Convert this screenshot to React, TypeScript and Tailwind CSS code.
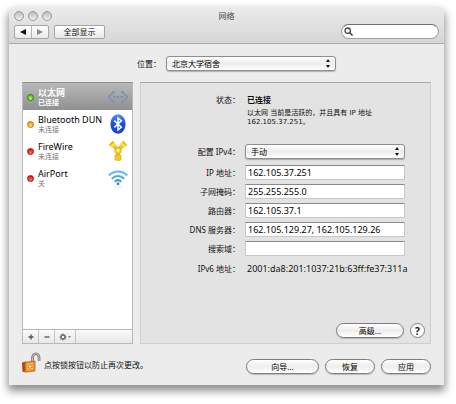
import React, { useState } from "react";

type Status = "green" | "amber" | "red";

interface Service {
    id: string;
    name: string;
    state: string;
    status: Status;
    icon: React.ReactNode;
}

const lampColors: Record<Status, string> = {
    green: "border-[#3c7a10] bg-[radial-gradient(circle_at_50%_75%,#b6ff5a,#4fc400_80%)]",
    amber: "border-[#b5751a] bg-[radial-gradient(circle_at_50%_75%,#ffe36a,#f59a00_80%)]",
    red: "border-[#a01515] bg-[radial-gradient(circle_at_50%_75%,#ff7a6a,#e00b0b_80%)]",
};

const EthernetIcon = () => (
    <svg viewBox="0 0 20 20" className="size-5" fill="none">
        <path d="M6.500 4.500.8 10l5.700 5.500M13.500 4.500 19.200 10l-5.700 5.500" stroke="#6f86a5" strokeWidth="2" />
        <path d="M6.500 5 1.300 10l5.200 5M13.500 5l5.200 5-5.200 5" stroke="#b4c3d6" strokeWidth="0.7" />
        <g fill="#6f86a5">
            <circle cx="6.500" cy="10" r="1.100" />
            <circle cx="10" cy="10" r="1.100" />
            <circle cx="13.500" cy="10" r="1.100" />
        </g>
    </svg>
);

const BluetoothIcon = () => (
    <svg viewBox="0 0 20 20" className="size-5" fill="none">
        <defs>
            <linearGradient id="bt" x1="0" y1="0" x2="0" y2="1">
                <stop offset="0" stopColor="#5c8df0" />
                <stop offset="0.5" stopColor="#1c50dc" />
                <stop offset="1" stopColor="#1a3fd0" />
            </linearGradient>
        </defs>
        <ellipse cx="10" cy="10" rx="7.600" ry="9.800" fill="url(#bt)" />
        <path d="m6.300 6.600 7 6.600L10 16V4l3.300 2.800-7 6.600" stroke="#fff" strokeWidth="1.500" />
    </svg>
);

const FireWireIcon = () => (
    <svg viewBox="0 0 20 20" className="size-5" fill="none">
        <path d="M10 9 5 4M10 9l5-5M10 9v8" stroke="#c99a00" strokeWidth="3.200" />
        <path d="M10 9 5 4M10 9l5-5M10 9v8" stroke="#f7d51d" strokeWidth="2.200" />
        <path d="m1.500 4.500 4-4M14.500.500l4 4" stroke="#e5b800" strokeWidth="2" />
        <path d="M3 6 7 2M13 2l4 4" stroke="#f9df3c" strokeWidth="2.600" />
        <rect x="7" y="14" width="6" height="5.300" rx="1" fill="#f3cf1a" stroke="#c99a00" strokeWidth="0.6" />
        <circle cx="10" cy="9.500" r="3.300" fill="#f7d51d" stroke="#c99a00" strokeWidth="0.6" />
        <circle cx="10" cy="9.500" r="1.300" fill="#fff6b8" />
    </svg>
);

const AirPortIcon = () => (
    <svg viewBox="0 0 20 20" className="size-5" fill="none" strokeWidth="2.100">
        <path d="M.8 7.500c5.200-5.300 13.200-5.300 18.400 0" stroke="#62b8ee" />
        <path d="M3.800 10.700c3.600-3.700 8.800-3.700 12.400 0" stroke="#4ba8e6" />
        <path d="M6.800 13.700c1.900-1.900 4.500-1.900 6.400 0" stroke="#3a98dc" />
        <circle cx="10" cy="15.800" r="1.500" fill="#2f8fd6" />
        <path d="M6 19h8" stroke="#ddd" strokeWidth="0.8" />
    </svg>
);

const LockIcon = () => (
    <svg viewBox="0 0 20 22" className="h-[22px] w-5 shrink-0" fill="none">
        <path d="M10.500 10V5.500a3.300 3.800 0 0 1 6.600 0V9" stroke="#777" strokeWidth="2.600" />
        <path d="M10.500 10V5.500a3.300 3.800 0 0 1 6.600 0V9" stroke="#c4c4c4" strokeWidth="1" />
        <path d="M0 10.500 4 9.500v10L.5 20Z" fill="#a54a16" />
        <path d="M3 10.200 13 9v10L3 20.300Z" fill="#f0922c" stroke="#b55a12" strokeWidth="0.7" />
        <path d="M5 12.200l6-.6M5 14.500l6-.6M5 17l6-.6" stroke="#ffd28a" strokeWidth="0.9" />
        <circle cx="8" cy="14.500" r="1.700" fill="#ffe1a6" stroke="#b55a12" strokeWidth="0.5" />
    </svg>
);

const services: Service[] = [
    { id: "ethernet", name: "以太网", state: "已连接", status: "green", icon: <EthernetIcon /> },
    { id: "bluetooth", name: "Bluetooth DUN", state: "未连接", status: "amber", icon: <BluetoothIcon /> },
    { id: "firewire", name: "FireWire", state: "未连接", status: "red", icon: <FireWireIcon /> },
    { id: "airport", name: "AirPort", state: "关", status: "red", icon: <AirPortIcon /> },
];

const PopUp = ({ id, options }: { id: string; options: string[] }) => (
    <div className="relative">
        <select
            id={id}
            className="block h-[15px] w-full appearance-none rounded-[3px] border border-[#8e8e8e] bg-linear-to-b from-white via-[#ececec] to-white pl-[5px] text-[8px] leading-[13px] text-black shadow-[0_1px_1px_rgba(0,0,0,0.25)]"
        >
            {options.map((option) => (
                <option key={option}>{option}</option>
            ))}
        </select>
        <svg viewBox="0 0 6 9" className="pointer-events-none absolute top-[3px] right-[5px] h-[9px] w-[6px]" fill="#111">
            <path d="m3 0 2 3H1ZM3 9 1 6h4Z" />
        </svg>
    </div>
);

const PillButton = ({ className, children }: { className: string; children: React.ReactNode }) => (
    <button
        type="button"
        className={`${className} flex h-[15px] items-center justify-center rounded-full border border-[#7d7d7d] bg-linear-to-b from-white via-[#ededed] to-white text-[8px] leading-[12px] text-black shadow-[0_1px_1px_rgba(0,0,0,0.2)]`}
    >
        {children}
    </button>
);

const Field = ({ id, label, value }: { id: string; label: string; value: string }) => (
    <>
        <label htmlFor={id} className="text-right">
            {label}
        </label>
        <input
            id={id}
            type="text"
            defaultValue={value}
            className="h-[15px] w-full min-w-0 border border-[#c8c8c8] border-t-[#8a8a8a] bg-white px-[2px] text-[9px] leading-[13px] text-black"
        />
    </>
);

const App: React.FC = () => {
    const [selected, setSelected] = useState("ethernet");

    return (
        <div className="bg-white pt-[7px] pr-3 pb-5 pl-[9px] font-['Noto_Sans','Noto_Sans_CJK_SC',sans-serif] text-[8px] leading-[10px] text-[#111]">
            <main className="overflow-clip rounded-t-[5px] bg-[#ececec] shadow-[0_5px_9px_1px_rgba(0,0,0,0.45)]">
                {/* TITLE BAR + TOOLBAR */}
                <header className="border-b border-[#aaaaaa] bg-linear-to-b from-[#ebebeb] to-[#d6d6d6] px-[5px] pt-1 pb-1">
                    <div className="grid grid-cols-3 items-center">
                        <div className="flex gap-1">
                            {["关闭", "最小化", "缩放"].map((label) => (
                                <button
                                    key={label}
                                    type="button"
                                    aria-label={label}
                                    className="size-[10px] rounded-full border border-[#999999] bg-linear-to-b from-[#bdbdbd] to-[#f0f0f0]"
                                />
                            ))}
                        </div>
                        <h1 className="text-center leading-[10px] text-[#444]">网络</h1>
                    </div>
                    <div className="mt-[3px] flex items-center">
                        <div className="flex h-[14px] w-[35px] rounded-[2px] border border-[#a5a5a5] bg-linear-to-b from-white to-[#e9e9e9]">
                            <button type="button" aria-label="后退" className="flex flex-1 items-center justify-center border-r border-[#b5b5b5]">
                                <svg viewBox="0 0 6 6" className="size-[6px]" fill="#111">
                                    <path d="M0 3 6 0v6Z" />
                                </svg>
                            </button>
                            <button type="button" aria-label="前进" className="flex flex-1 items-center justify-center">
                                <svg viewBox="0 0 6 6" className="size-[6px]" fill="#888">
                                    <path d="M6 3 0 0v6Z" />
                                </svg>
                            </button>
                        </div>
                        <button
                            type="button"
                            className="ml-[5px] h-[14px] w-[51px] rounded-[2px] border border-[#a5a5a5] bg-linear-to-b from-white to-[#e9e9e9] leading-[12px]"
                        >
                            全部显示
                        </button>
                        <div className="relative ml-auto">
                            <input
                                type="search"
                                aria-label="搜索"
                                className="block h-[15px] w-[98px] rounded-full border border-[#a0a0a0] border-t-[#6f6f6f] bg-white pr-2 pl-[14px] text-[8px]"
                            />
                            <svg viewBox="0 0 9 9" className="absolute top-[3px] left-[3px] size-[9px]" fill="none" stroke="#444" strokeWidth="1.3">
                                <circle cx="3.700" cy="3.700" r="2.700" />
                                <path d="m5.700 5.700 2.800 2.800" strokeWidth="1.6" />
                            </svg>
                        </div>
                    </div>
                </header>

                {/* LOCATION */}
                <div className="flex items-center justify-center pt-3 pl-5">
                    <label htmlFor="location" className="mr-[5px]">
                        位置：
                    </label>
                    <div className="w-[170px]">
                        <PopUp id="location" options={["北京大学宿舍"]} />
                    </div>
                </div>

                <div className="flex gap-[7px] px-[13px] pt-[11px]">
                    {/* SERVICE LIST */}
                    <section className="flex w-[111px] shrink-0 flex-col border border-[#b8b8b8] border-t-[#8f8f8f] bg-white">
                        <ul className="flex-1">
                            {services.map((service) => {
                                const active = service.id === selected;
                                return (
                                    <li key={service.id}>
                                        <button
                                            type="button"
                                            onClick={() => setSelected(service.id)}
                                            className={`flex h-[27px] w-full items-center pt-px pr-1 pl-1 text-left ${
                                                active ? "bg-linear-to-b from-[#b9b9b9] to-[#909090] text-white" : ""
                                            }`}
                                        >
                                            <span className={`size-[7px] shrink-0 rounded-full border ${lampColors[service.status]}`} />
                                            <span className="ml-1 flex-1 whitespace-nowrap">
                                                <span className={`block text-[9px] leading-[10px] ${active ? "font-bold" : "text-black"}`}>
                                                    {service.name}
                                                </span>
                                                <span className={`block text-[7px] leading-[9px] ${active ? "font-bold" : "text-[#777]"}`}>
                                                    {service.state}
                                                </span>
                                            </span>
                                            {service.icon}
                                        </button>
                                    </li>
                                );
                            })}
                        </ul>
                        <div className="flex h-[14px] border-t border-[#b8b8b8] bg-linear-to-b from-[#fafafa] to-[#e8e8e8]">
                            <button type="button" aria-label="添加" className="flex w-4 items-center justify-center border-r border-[#c4c4c4]">
                                <svg viewBox="0 0 6 6" className="size-[6px]" stroke="#555" strokeWidth="1.4">
                                    <path d="M3 .5v5M.5 3h5" />
                                </svg>
                            </button>
                            <button type="button" aria-label="移除" className="flex w-4 items-center justify-center border-r border-[#c4c4c4]">
                                <svg viewBox="0 0 6 6" className="size-[6px]" stroke="#666" strokeWidth="1.4">
                                    <path d="M.5 3h5" />
                                </svg>
                            </button>
                            <button type="button" aria-label="操作" className="flex w-[21px] items-center justify-center border-r border-[#c4c4c4]">
                                <svg viewBox="0 0 12 8" className="h-2 w-3" fill="none" stroke="#666">
                                    <circle cx="4" cy="4" r="2" strokeWidth="1.4" />
                                    <path d="M4 .5v1.500M4 6v1.500M.5 4h1.500M6 4h1.500M1.500 1.500l1 1M5.500 5.500l1 1M6.500 1.500l-1 1M2.500 5.500l-1 1" />
                                    <path d="M9 3.200h3L10.500 5Z" fill="#666" stroke="none" />
                                </svg>
                            </button>
                        </div>
                    </section>

                    {/* DETAILS */}
                    <section className="flex min-h-[262px] min-w-0 flex-1 flex-col border border-[#cfcfcf] border-t-[#a8a8a8] bg-[#e3e3e3] pr-[5px] pb-[5px]">
                        <div className="grid grid-cols-[99px_minmax(0,1fr)] items-center gap-x-[5px] gap-y-[4px] pt-3 pr-5">
                            <span className="text-right">状态：</span>
                            <strong className="pl-[2px]">已连接</strong>
                            <p className="col-start-2 mb-[13px] pl-[2px] font-['DejaVu_Sans','Noto_Sans_CJK_SC',sans-serif] text-[7px] leading-[9px]">
                                以太网 当前是活跃的，并且具有 IP 地址
                                <br />
                                162.105.37.251。
                            </p>
                            <label htmlFor="ipv4" className="text-right">
                                配置 IPv4：
                            </label>
                            <PopUp id="ipv4" options={["手动"]} />
                        </div>
                        <div className="grid grid-cols-[99px_minmax(0,1fr)] items-center gap-x-[5px] gap-y-[4px] pt-[6px] pr-5">
                            <Field id="ip" label="IP 地址：" value="162.105.37.251" />
                            <Field id="mask" label="子网掩码：" value="255.255.255.0" />
                            <Field id="router" label="路由器：" value="162.105.37.1" />
                            <Field id="dns" label="DNS 服务器：" value="162.105.129.27, 162.105.129.26" />
                            <Field id="domain" label="搜索域：" value="" />
                            <span className="text-right">IPv6 地址：</span>
                            <span className="py-1 pl-[2px] text-[9px] leading-[10px] whitespace-nowrap">
                                2001:da8:201:1037:21b:63ff:fe37:311a
                            </span>
                        </div>
                        <div className="mt-auto flex items-center justify-end gap-[6px]">
                            <PillButton className="w-[68px]">高级…</PillButton>
                            <button
                                type="button"
                                aria-label="帮助"
                                className="flex size-[15px] items-center justify-center rounded-full border border-[#7d7d7d] bg-white text-[10px] leading-[12px] font-bold"
                            >
                                ?
                            </button>
                        </div>
                    </section>
                </div>

                {/* FOOTER */}
                <footer className="flex items-center px-[13px] pt-[7px] pb-[11px]">
                    <LockIcon />
                    <p className="ml-[2px] pt-1">点按锁按钮以防止再次更改。</p>
                    <div className="ml-auto flex gap-[6px] pt-2">
                        <PillButton className="w-[73px]">向导…</PillButton>
                        <PillButton className="w-[50px]">恢复</PillButton>
                        <PillButton className="w-[50px]">应用</PillButton>
                    </div>
                </footer>
            </main>
        </div>
    );
};

export default App;
